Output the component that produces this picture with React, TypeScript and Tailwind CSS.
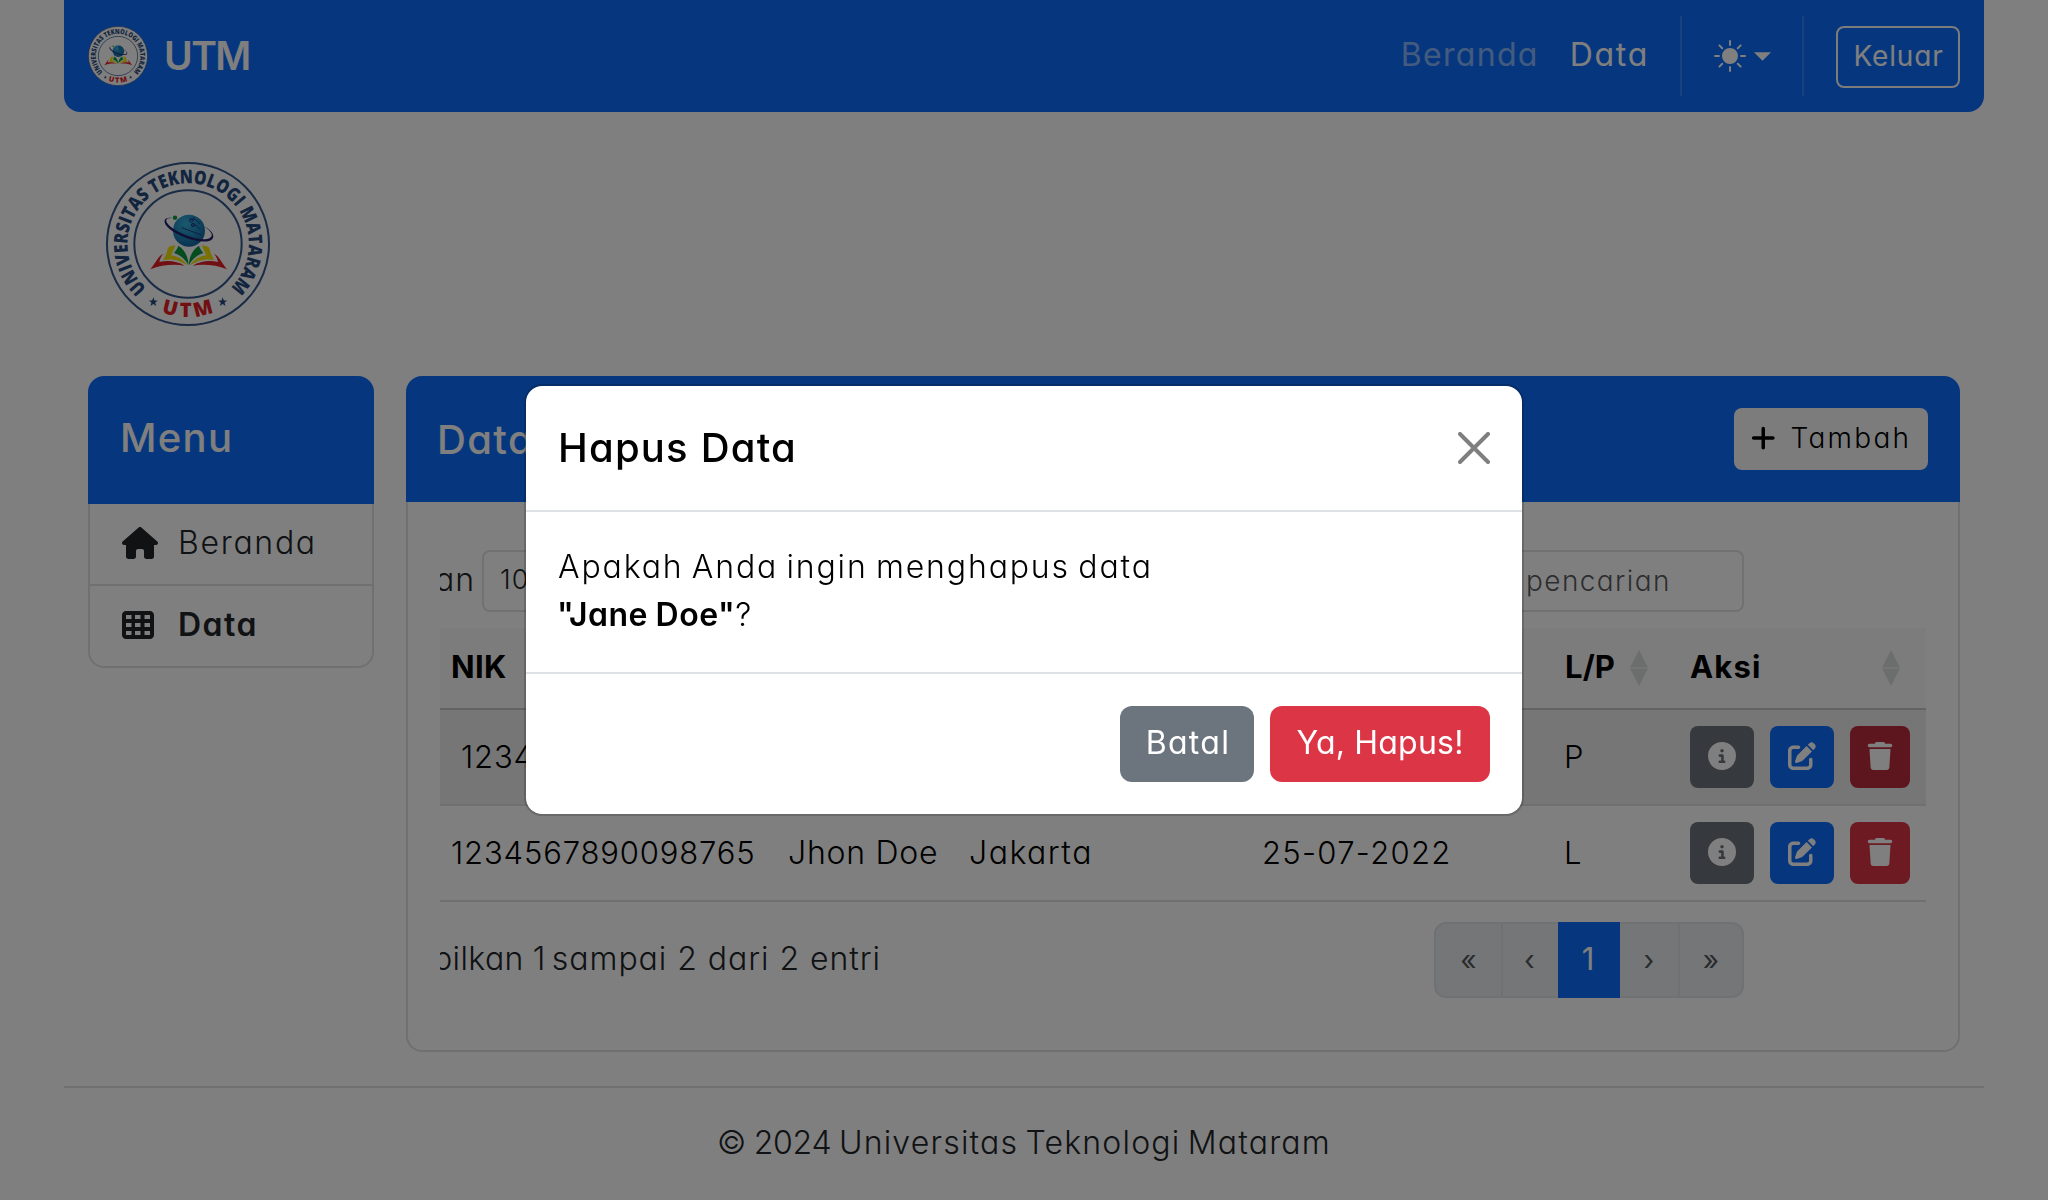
import type { ReactNode } from 'react';
import { BsSunFill } from 'react-icons/bs';
import { FaCircleInfo, FaHouse, FaPenToSquare, FaPlus, FaTableCells, FaTrash } from 'react-icons/fa6';

function Logo({ className }: { className: string }) {
  return (
    <svg viewBox="48 36 492 492" className={className} aria-label="Universitas Teknologi Mataram">
      <defs>
        <path id="ring-top" d="M170 415 A182 182 0 1 1 424 410" />
        <path id="ring-bottom" d="M104 392 A220 220 0 0 0 484 392" />
        <radialGradient id="globe" cx="0.4" cy="0.3" r="0.8">
          <stop offset="0" stopColor="#35b4dc" />
          <stop offset="0.6" stopColor="#1b82b8" />
          <stop offset="1" stopColor="#145a94" />
        </radialGradient>
      </defs>
      <circle cx="294" cy="282" r="243" fill="#fff" stroke="#34568c" strokeWidth="6" />
      <circle cx="294" cy="282" r="161" fill="none" stroke="#34568c" strokeWidth="6" />
      <text className="font-['Open_Sans'] font-extrabold" fontSize="57" fill="#274a7d" textLength="866" lengthAdjust="spacingAndGlyphs">
        <textPath href="#ring-top">UNIVERSITAS TEKNOLOGI MATARAM</textPath>
      </text>
      <text className="font-['Open_Sans'] font-extrabold" fontSize="60" fill="#e31e24" textAnchor="middle" letterSpacing="11">
        <textPath href="#ring-bottom" startOffset="51%">UTM</textPath>
      </text>
      {[190, 398].map((x) => (
        <path key={x} transform={`translate(${x} 456)`} fill="#274a7d" d="M0-14 3.5-4.5 13-4.5 5.5 2 8.5 12 0 6-8.5 12-5.5 2-13-4.5-3.5-4.5Z" />
      ))}
      <circle cx="297" cy="242" r="48" fill="url(#globe)" />
      <path d="M300 208h16l14 14M304 225h14l12 14M275 233l60 22M310 208v-6" fill="none" stroke="#1d3f8a" strokeWidth="3" />
      <circle cx="304" cy="211" r="5" fill="none" stroke="#1d3f8a" strokeWidth="3" />
      <circle cx="309" cy="225" r="5" fill="none" stroke="#1d3f8a" strokeWidth="3" />
      <path d="M246 204C222 200 214 216 238 236 272 264 340 284 364 270 380 258 362 238 340 228 366 244 372 258 358 265 334 276 272 254 242 230 222 212 226 203 246 204Z" fill="#241f6e" />
      <circle cx="255" cy="203" r="6.5" fill="#0a9a3c" />
      {['', 'translate(592 0) scale(-1 1)'].map((t) => (
        <g key={t} transform={t}>
          <path d="M220 312C206 316 196 340 181 358 214 344 254 342 284 347 262 334 236 330 208 336 210 326 214 318 220 312Z" fill="#e31e24" />
          <path d="M256 287C246 286 238 290 234 294 232 306 226 318 220 330 250 324 274 334 292 346 280 328 262 318 243 316 248 306 252 296 256 287Z" fill="#f2e205" />
          <path d="M265 287C262 296 257 303 252 309 270 314 286 328 295 345 296 326 286 300 265 287Z" fill="#0a9a3c" />
        </g>
      ))}
    </svg>
  );
}

function SortIcon() {
  return (
    <svg viewBox="0 0 18 36" className="h-9 w-[18px] fill-[#d9dddd]">
      <path d="M9 0 18 17.500H0Z" />
      <path d="M0 18.500H18L9 36Z" />
    </svg>
  );
}

function Head({ label, className, sort = '' }: { label: string; className: string; sort?: string }) {
  return (
    <div className={`flex items-center justify-between pl-2.5 text-[31px] font-bold ${sort}`}>
      <span className={`pb-0.5 ${className}`}>{label}</span>
      <SortIcon />
    </div>
  );
}

function ActionButton({ color, children }: { color: string; children: ReactNode }) {
  return <button className={`flex h-[62px] items-center justify-center rounded-lg pb-[3px] text-[28px] text-white ${color}`}>{children}</button>;
}

type Person = { nik: string; name: string; address: string; date: string; sex: string; active?: boolean };

const people: Person[] = [
  { nik: '1234567890123456', name: 'Jane Doe', address: 'Mataram', date: '25-07-2022', sex: 'P', active: true },
  { nik: '1234567890098765', name: 'Jhon Doe', address: 'Jakarta', date: '25-07-2022', sex: 'L' },
];

const columns = 'grid grid-cols-[338px_181px_293px_302px_126px_246px] border-b-2';

function Row({ p }: { p: Person }) {
  return (
    <div className={`${columns} h-24 items-center border-[#dee0e2] text-[31px] text-black ${p.active ? 'bg-[#ececec]' : ''}`}>
      <span className={`tracking-[0.85px] ${p.active ? 'pl-[21px]' : 'pl-[11px]'}`}>{p.nik}</span>
      <span className="pl-2.5 text-[32px] tracking-[0.75px]">{p.name}</span>
      <span className="pl-2.5 text-[32px] tracking-[1.5px]">{p.address}</span>
      <span className="pl-2.5 tracking-[1.3px]">{p.date}</span>
      <span className="pl-2.5">{p.sex}</span>
      <div className="flex gap-4 pl-2.5">
        <ActionButton color="w-16 bg-[#6c757d]"><FaCircleInfo /></ActionButton>
        <ActionButton color="w-16 bg-[#0d6efd]"><FaPenToSquare /></ActionButton>
        <ActionButton color={p.active ? 'w-[60px] bg-[#bb2d3b]' : 'w-[60px] bg-[#dc3545]'}><FaTrash /></ActionButton>
      </div>
    </div>
  );
}

function Navbar() {
  return (
    <header className="mx-16 flex h-28 items-center rounded-b-2xl bg-[#0d6efd] pr-6 pl-6 text-white">
      <Logo className="size-[60px]" />
      <span className="ml-4 pt-px text-[39px] font-semibold tracking-[-1.57px]">UTM</span>
      <nav className="ml-auto flex items-center text-[32px] font-normal">
        <span className="pb-0.5 tracking-[1.3px] text-white/50">Beranda</span>
        <span className="ml-[31px] pb-0.5 tracking-[1.7px]">Data</span>
        <span className="ml-[31px] h-20 w-0.5 bg-white/15" />
        <BsSunFill className="ml-8 size-8" />
        <svg viewBox="0 0 18 9" className="ml-2 h-[9px] w-[17px] fill-current"><path d="M0 0H18L9 9Z" /></svg>
        <span className="ml-[31px] h-20 w-0.5 bg-white/15" />
        <button className="ml-8 mt-0.5 flex h-[62px] w-[124px] items-center justify-center rounded-lg border-2 border-[#f8f9fa] pb-0.5 pl-px text-[28px] tracking-[0.83px]">Keluar</button>
      </nav>
    </header>
  );
}

function Sidebar() {
  return (
    <aside className="w-[286px] text-[32px] text-[#212529]">
      <div className="flex h-32 items-center rounded-t-2xl bg-[#0d6efd] pb-[5px] pl-8 text-[40px] font-medium tracking-[1.3px] text-white">Menu</div>
      <div className="rounded-b-2xl border-2 border-t-0 border-[#dee0e2]">
        <div className="flex h-[82px] items-center border-b-2 border-[#dee0e2] pb-0.5 pl-8">
          <FaHouse className="h-8 w-9" />
          <span className="ml-5 tracking-[1.7px]">Beranda</span>
        </div>
        <div className="flex h-20 items-center pb-0.5 pl-8">
          <FaTableCells className="size-8" />
          <span className="ml-6 font-semibold tracking-[1.5px]">Data</span>
        </div>
      </div>
    </aside>
  );
}

function Pagination() {
  const side = 'flex items-center justify-center border-y-2 border-[#dee2e6] bg-[#e9ecef] text-[#212529]/75';
  return (
    <div className="flex h-[76px] w-[310px] text-[28px] font-normal">
      <span className={`${side} w-[69px] rounded-l-xl border-x-2`}>«</span>
      <span className={`${side} w-[55px] pr-0.5`}>‹</span>
      <span className="flex w-[62px] items-center justify-center bg-[#0d6efd] pr-0.5 pb-px text-[31px] text-white">1</span>
      <span className={`${side} w-[60px] border-r-2`}>›</span>
      <span className={`${side} flex-1 rounded-r-xl border-r-2`}>»</span>
    </div>
  );
}

function DataCard() {
  return (
    <section className="w-[1554px] text-[32px] text-[#212529]">
      <div className="flex h-[126px] items-center justify-between rounded-t-2xl bg-[#0d6efd] pr-8 pl-[31px]">
        <h2 className="pt-0.5 text-[40px] font-medium tracking-[1.36px] text-white">Data</h2>
        <button className="flex h-[62px] w-[194px] items-center rounded-lg bg-[#f8f9fa] pb-0.5 pl-[17px] text-[28px] text-black">
          <FaPlus className="h-7 w-[24.5px]" />
          <span className="ml-[15px] tracking-[2.3px]">Tambah</span>
        </button>
      </div>
      <div className="h-[550px] rounded-b-2xl border-2 border-t-0 border-[#dee0e2] pt-12 pr-8 pl-8">
        <div className="flex h-[62px] items-center">
          <div className="flex w-[35px] justify-end overflow-hidden pb-[3px] tracking-[0.96px]"><span>Tampilkan</span></div>
          <div className="ml-[7px] flex h-[62px] w-[140px] items-center rounded-lg border-2 border-[#dee2e6] pb-px pl-4 text-[27px] tracking-[1px]">10</div>
          <div className="mr-[182px] ml-auto flex h-[62px] w-[250px] items-center rounded-lg border-2 border-[#dee2e6] pb-px pl-[30px] text-[28px] tracking-[1.4px] text-[#212529]/75">pencarian</div>
        </div>
        <div className="mt-4 w-[1486px]">
          <div className={`${columns} h-[82px] border-[#c6c6c6] bg-[#f8f8f8] text-black`}>
            <Head label="NIK" className="pl-px tracking-[0.33px]" sort="pr-[26px]" />
            <Head label="Nama" className="tracking-[1px]" sort="pr-[26px]" />
            <Head label="Alamat" className="tracking-[1px]" sort="pr-[26px]" />
            <Head label="Tanggal Lahir" className="tracking-[1px]" sort="pr-[40px]" />
            <Head label="L/P" className="pl-px tracking-[0.1px]" sort="pr-8" />
            <Head label="Aksi" className="tracking-[1.2px]" sort="pr-[26px]" />
          </div>
          {people.map((p) => <Row key={p.nik} p={p} />)}
        </div>
        <div className="mt-5 flex items-center justify-between pr-[182px]">
          <div className="flex w-[441px] justify-end overflow-hidden pb-[3px] whitespace-nowrap tracking-[0.96px]">
            <span className="mr-[9px] shrink-0 tracking-[0.4px]">Menampilkan</span>
            <span className="w-[19px] shrink-0">1</span>
            <span className="shrink-0">sampai 2 dari 2 entri</span>
          </div>
          <Pagination />
        </div>
      </div>
    </section>
  );
}

function DeleteModal() {
  return (
    <div className="fixed inset-0 flex items-center justify-center bg-black/50">
      <div className="h-[432px] w-[1000px] rounded-[18px] border-2 border-black/[0.175] bg-white bg-clip-padding text-black">
        <div className="flex h-[126px] items-center justify-between border-b-2 border-[#dee2e6] pr-8 pl-8">
          <h3 className="pb-px text-[40px] font-medium tracking-[1.2px]">Hapus Data</h3>
          <svg viewBox="0 0 16 16" className="size-8 fill-none stroke-[#7f7f7f] stroke-[2] [stroke-linecap:round]"><path d="M1 1 15 15M15 1 1 15" /></svg>
        </div>
        <div className="h-[162px] border-b-2 border-[#dee2e6] pt-[31px] pl-8 text-[32px] leading-[48px] tracking-[1.85px] [word-spacing:-2.5px]">
          <p>Apakah Anda ingin menghapus data</p>
          <p className="-ml-px"><b className="font-semibold tracking-[0.5px] [word-spacing:-1px]">"Jane Doe"</b>?</p>
        </div>
        <div className="flex h-[140px] items-center justify-end gap-4 pr-8 text-[32px] font-normal text-white">
          <button className="flex h-[76px] w-[134px] items-center justify-center rounded-xl bg-[#6c757d] pb-0.5 pl-0.5 tracking-[1.3px]">Batal</button>
          <button className="flex h-[76px] w-[220px] items-center justify-center rounded-xl bg-[#dc3545] pb-0.5 tracking-[0.2px]">Ya, Hapus!</button>
        </div>
      </div>
    </div>
  );
}

export default function App() {
  return (
    <div className="h-[1200px] overflow-hidden bg-white font-['Inter',sans-serif] font-[350] [font-feature-settings:'cv11']">
      <Navbar />
      <Logo className="mt-[50px] ml-[106px] size-[164px]" />
      <main className="mt-[50px] ml-[88px] flex items-start gap-8">
        <Sidebar />
        <DataCard />
      </main>
      <footer className="mx-16 mt-[34px] flex h-28 items-center justify-center border-t-2 border-[#dee0e2] text-[32px] text-[#212529]">
        <p className="tracking-[1.2px] [word-spacing:-3px]">
          <span className="tracking-[-0.3px] [word-spacing:-1px]">© 2024 </span>Universitas Teknologi Mataram
        </p>
      </footer>
      <DeleteModal />
    </div>
  );
}
